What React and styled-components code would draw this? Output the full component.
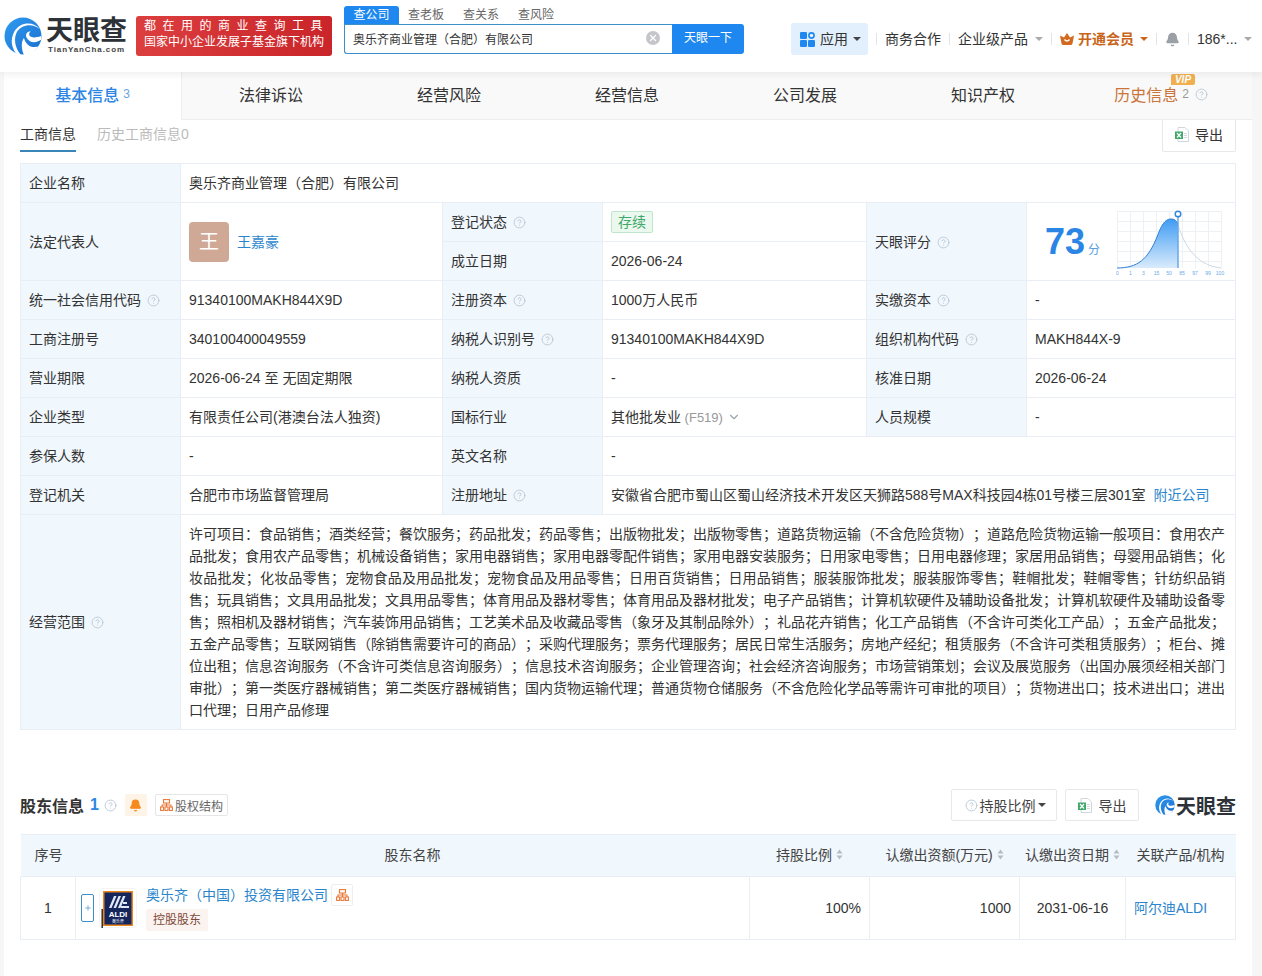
import * as React from 'react'
import styled, { createGlobalStyle } from 'styled-components'
import { CircleHelp, Bell, ChevronDown, X, Plus } from 'lucide-react'

const FONT = `"Liberation Sans", "Noto Sans CJK SC", sans-serif`

const scopeLines = [
	'许可项目：食品销售；酒类经营；餐饮服务；药品批发；药品零售；出版物批发；出版物零售；道路货物运输（不含危险货物）；道路危险货物运输一般项目：食用农产',
	'品批发；食用农产品零售；机械设备销售；家用电器销售；家用电器零配件销售；家用电器安装服务；日用家电零售；日用电器修理；家居用品销售；母婴用品销售；化',
	'妆品批发；化妆品零售；宠物食品及用品批发；宠物食品及用品零售；日用百货销售；日用品销售；服装服饰批发；服装服饰零售；鞋帽批发；鞋帽零售；针纺织品销',
	'售；玩具销售；文具用品批发；文具用品零售；体育用品及器材零售；体育用品及器材批发；电子产品销售；计算机软硬件及辅助设备批发；计算机软硬件及辅助设备零',
	'售；照相机及器材销售；汽车装饰用品销售；工艺美术品及收藏品零售（象牙及其制品除外）；礼品花卉销售；化工产品销售（不含许可类化工产品）；五金产品批发；',
	'五金产品零售；互联网销售（除销售需要许可的商品）；采购代理服务；票务代理服务；居民日常生活服务；房地产经纪；租赁服务（不含许可类租赁服务）；柜台、摊',
	'位出租；信息咨询服务（不含许可类信息咨询服务）；信息技术咨询服务；企业管理咨询；社会经济咨询服务；市场营销策划；会议及展览服务（出国办展须经相关部门',
	'审批）；第一类医疗器械销售；第二类医疗器械销售；国内货物运输代理；普通货物仓储服务（不含危险化学品等需许可审批的项目）；货物进出口；技术进出口；进出',
]

const tabs = ['基本信息', '法律诉讼', '经营风险', '经营信息', '公司发展', '知识产权', '历史信息']

const Swirl = ({ size }) =>
	<svg width={size} height={size} viewBox="0 0 40 40" style={{ flex: 'none' }}>
		<defs>
			<linearGradient id="sw" x1="0" y1="0" x2="1" y2="1">
				<stop offset="0" stopColor="#2f9bf0" />
				<stop offset="1" stopColor="#1a6fd0" />
			</linearGradient>
		</defs>
		<circle cx="20" cy="20" r="19.5" fill="url(#sw)" />
		<path d="M38 13C30 6 19 8 14 15C10 22 11 31 17 39L14 40C8 33 6 24 11 15C17 5 31 4 38 13Z" fill="#fff" />
		<path d="M39 24C33 28 27 27 24 22C22 19 24 15 28 15C24 19 28 24 39 20Z" fill="#fff" />
		<path d="M21 40C18 33 18 26 21 22C23 29 28 33 36 31C32 37 27 40 21 40Z" fill="#fff" />
	</svg>

const AppsIcon = () =>
	<svg width="15" height="15" viewBox="0 0 15 15">
		<rect x="0" y="0" width="7" height="7" rx="1.2" fill="#1e88f0" />
		<circle cx="11.5" cy="3.5" r="2.6" fill="none" stroke="#1e88f0" strokeWidth="1.6" />
		<rect x="0" y="8" width="7" height="7" rx="1.2" fill="#1e88f0" />
		<rect x="8" y="8" width="7" height="7" rx="1.2" fill="#1e88f0" />
	</svg>

const CrownIcon = () =>
	<svg width="14" height="12" viewBox="0 0 14 12">
		<path d="M0 2.5L4 4.5L7 0L10 4.5L14 2.5L12.5 10.5Q12 12 10.5 12H3.5Q2 12 1.5 10.5Z" fill="#d2691e" />
		<path d="M4.5 6.5Q7 9.5 9.5 6.5" fill="none" stroke="#fff" strokeWidth="1.5" />
	</svg>

const ExcelIcon = () =>
	<svg width="14" height="15" viewBox="0 0 14 15">
		<path d="M3 .5H10L13.5 4V14.5H3Z" fill="#fff" stroke="#cfd6dc" />
		<rect x="9" y="6" width="3" height="1" fill="#d5dade" />
		<rect x="9" y="8" width="3" height="1" fill="#d5dade" />
		<rect x="9" y="10" width="3" height="1" fill="#d5dade" />
		<rect x="0" y="4.5" width="8" height="7.5" fill="#3fa76a" />
		<path d="M2 6L6 10.5M6 6L2 10.5" stroke="#fff" strokeWidth="1.2" />
	</svg>

const TreeIcon = () =>
	<svg width="13" height="12" viewBox="0 0 13 12">
		<g fill="none" stroke="#e8793a" strokeWidth="1.1">
			<rect x="3.5" y=".6" width="6" height="3.4" />
			<rect x=".6" y="8" width="3" height="3.4" />
			<rect x="5" y="8" width="3" height="3.4" />
			<rect x="9.4" y="8" width="3" height="3.4" />
			<path d="M2 8V6H11V8M6.5 4V8" />
		</g>
	</svg>

const SortIcon = () =>
	<svg width="7" height="11" viewBox="0 0 7 11">
		<path d="M3.5 .5L6.5 4.5H.5Z" fill="#b4bcc4" />
		<path d="M3.5 10.5L6.5 6.5H.5Z" fill="#b4bcc4" />
	</svg>

const ScoreChart = () =>
	<svg width="110" height="70" viewBox="0 0 110 70">
		<defs>
			<linearGradient id="bell" x1="0" y1="0" x2="0" y2="1">
				<stop offset="0" stopColor="#3f9cf3" />
				<stop offset="1" stopColor="#d9ebfc" />
			</linearGradient>
		</defs>
		<g stroke="#eef1f4" strokeWidth="1" fill="none">
			<path d="M1 4.5H105M1 14.5H105M1 24.5H105M1 34.5H105M1 44.5H105M1 54.5H105" />
			<path d="M1.5 4V61M14.5 4V61M27.5 4V61M40.5 4V61M53.5 4V61M66.5 4V61M79.5 4V61M92.5 4V61M105.5 4V61" />
		</g>
		<path d="M62 18C68 36 78 58 105 61" fill="none" stroke="#cdd9e4" strokeWidth="1" />
		<path d="M1 61C22 61 32 52 41 30C46 16 50 12 55 12C58 12 60 13 62 17V61Z" fill="url(#bell)" />
		<path d="M1 61C22 61 32 52 41 30C46 16 50 12 55 12C58 12 60 13 62 17" fill="none" stroke="#2f7fd4" strokeWidth="1" />
		<path d="M62 10V61" stroke="#6aa9e6" strokeWidth="1.5" />
		<circle cx="62" cy="7" r="2.8" fill="#fff" stroke="#2f86dc" strokeWidth="1.4" />
		<g fontSize="5" fill="#6aa9e6" textAnchor="middle" fontFamily="Liberation Sans">
			<text x="1.5" y="67.5">0</text>
			<text x="14.5" y="67.5">1</text>
			<text x="27.5" y="67.5">3</text>
			<text x="40.5" y="67.5">15</text>
			<text x="53" y="67.5">50</text>
			<text x="66" y="67.5">85</text>
			<text x="79" y="67.5">97</text>
			<text x="92" y="67.5">99</text>
			<text x="104" y="67.5">100</text>
		</g>
	</svg>

const AldiLogo = () =>
	<svg width="38" height="40" viewBox="0 0 38 40" style={{ flex: 'none' }}>
		<rect x=".5" y=".5" width="37" height="39" rx="3" fill="#fff" stroke="#f4f4f4" />
		<rect x="4" y="3" width="30" height="35" fill="#e8871e" />
		<rect x="5.5" y="4.5" width="27" height="32" fill="#14265c" />
		<path d="M10 20L15 8H17.5L12.5 20ZM14.5 20L19.5 8H22L17 20ZM19 20L24 8H26.5L21.5 20Z" fill="#dfe8f4" />
		<path d="M24 14H28V16H24ZM22 18H30V20H22Z" fill="#dfe8f4" />
		<text x="19" y="29" fontSize="8" fontWeight="700" fill="#fff" textAnchor="middle" fontFamily="Liberation Sans">ALDI</text>
		<text x="19" y="35" fontSize="4" fill="#fff" textAnchor="middle" fontFamily="Noto Sans CJK SC">奥乐齐</text>
		<rect x="2.5" y="21" width="1.4" height="19" fill="#222" />
	</svg>

const Help = ({ size = 13 }) => <HelpMark size={size} strokeWidth={1.8} />

const App = () =>
	<Page>
		<GlobalStyle />
		<Header>
			<Logo>
				<Swirl size={38} />
				<LogoText>
					<LogoName>天眼查</LogoName>
					<LogoDomain>TianYanCha.com</LogoDomain>
				</LogoText>
			</Logo>
			<Banner>
				<BannerTop>都在用的商业查询工具</BannerTop>
				<div>国家中小企业发展子基金旗下机构</div>
			</Banner>
			<Search>
				<SearchTabs>
					<SearchTab active>查公司</SearchTab>
					<SearchTab>查老板</SearchTab>
					<SearchTab>查关系</SearchTab>
					<SearchTab>查风险</SearchTab>
				</SearchTabs>
				<SearchRow>
					<SearchInput>
						<span>奥乐齐商业管理（合肥）有限公司</span>
						<ClearButton><X size={10} strokeWidth={3} color="#fff" /></ClearButton>
					</SearchInput>
					<SearchButton>天眼一下</SearchButton>
				</SearchRow>
			</Search>
			<HeaderNav>
				<AppButton><AppsIcon />应用<Caret dark /></AppButton>
				<NavSep />
				<NavItem>商务合作</NavItem>
				<NavSep />
				<NavItem>企业级产品<Caret /></NavItem>
				<NavSep />
				<NavItem vip><CrownIcon />开通会员<Caret vip /></NavItem>
				<NavSep />
				<NavItem><Bell size={15} fill="#9aa0a6" color="#9aa0a6" /></NavItem>
				<NavSep />
				<NavItem>186*...<Caret /></NavItem>
			</HeaderNav>
		</Header>
		<Main>
			<TabBar>
				{tabs.map((t, i) =>
					<Tab key={t} active={i === 0} vip={i === 6}>
						{t}
						{i === 0 && <TabCount active>3</TabCount>}
						{i === 6 && <TabCount>2</TabCount>}
						{i === 6 && <Help size={13} />}
						{i === 6 && <VipBadge>VIP</VipBadge>}
					</Tab>
				)}
			</TabBar>
			<SubTabs>
				<SubTab active>工商信息</SubTab>
				<SubTab>历史工商信息0</SubTab>
				<TopExport><ExcelIcon />导出</TopExport>
			</SubTabs>
			<Content>
				<InfoTable>
					<colgroup>
						<col width="160" />
						<col width="262" />
						<col width="160" />
						<col width="264" />
						<col width="160" />
						<col width="209" />
					</colgroup>
					<tbody>
						<tr>
							<Label>企业名称</Label>
							<Cell colSpan={5}>奥乐齐商业管理（合肥）有限公司</Cell>
						</tr>
						<tr>
							<Label rowSpan={2}>法定代表人</Label>
							<Cell rowSpan={2}>
								<Person>
									<Avatar>王</Avatar>
									<LinkText>王嘉豪</LinkText>
								</Person>
							</Cell>
							<Label>登记状态 <Help /></Label>
							<Cell><StatusTag>存续</StatusTag></Cell>
							<Label rowSpan={2}>天眼评分 <Help /></Label>
							<Cell rowSpan={2}>
								<Score>
									<ScoreValue>73<ScoreUnit>分</ScoreUnit></ScoreValue>
									<ScoreChart />
								</Score>
							</Cell>
						</tr>
						<tr>
							<Label>成立日期</Label>
							<Cell>2026-06-24</Cell>
						</tr>
						<tr>
							<Label>统一社会信用代码 <Help /></Label>
							<Cell>91340100MAKH844X9D</Cell>
							<Label>注册资本 <Help /></Label>
							<Cell>1000万人民币</Cell>
							<Label>实缴资本 <Help /></Label>
							<Cell>-</Cell>
						</tr>
						<tr>
							<Label>工商注册号</Label>
							<Cell>340100400049559</Cell>
							<Label>纳税人识别号 <Help /></Label>
							<Cell>91340100MAKH844X9D</Cell>
							<Label>组织机构代码 <Help /></Label>
							<Cell>MAKH844X-9</Cell>
						</tr>
						<tr>
							<Label>营业期限</Label>
							<Cell>2026-06-24 至 无固定期限</Cell>
							<Label>纳税人资质</Label>
							<Cell>-</Cell>
							<Label>核准日期</Label>
							<Cell>2026-06-24</Cell>
						</tr>
						<tr>
							<Label>企业类型</Label>
							<Cell>有限责任公司(港澳台法人独资)</Cell>
							<Label>国标行业</Label>
							<Cell>其他批发业<MutedCode> (F519)</MutedCode> <ChevronDown size={14} color="#9aa5b1" style={{ verticalAlign: -2 }} /></Cell>
							<Label>人员规模</Label>
							<Cell>-</Cell>
						</tr>
						<tr>
							<Label>参保人数</Label>
							<Cell>-</Cell>
							<Label>英文名称</Label>
							<Cell colSpan={3}>-</Cell>
						</tr>
						<tr>
							<Label>登记机关</Label>
							<Cell>合肥市市场监督管理局</Cell>
							<Label>注册地址 <Help /></Label>
							<Cell colSpan={3}>
								安徽省合肥市蜀山区蜀山经济技术开发区天狮路588号MAX科技园4栋01号楼三层301室
								<NearbyLink>附近公司</NearbyLink>
							</Cell>
						</tr>
						<tr>
							<Label>经营范围 <Help /></Label>
							<ScopeCell colSpan={5}>
								{scopeLines.map(line => <ScopeLine key={line}>{line}</ScopeLine>)}
								<div>口代理；日用产品修理</div>
							</ScopeCell>
						</tr>
					</tbody>
				</InfoTable>

				<SectionBar>
					<SectionTitle>股东信息</SectionTitle>
					<SectionCount>1</SectionCount>
					<Help />
					<BellChip><Bell size={13} fill="#f58a1f" color="#f58a1f" /></BellChip>
					<ChipButton><TreeIcon />股权结构</ChipButton>
					<SectionActions>
						<ActionButton wide><Help />持股比例<Caret dark /></ActionButton>
						<ActionButton><ExcelIcon />导出</ActionButton>
						<SmallLogo>
							<Swirl size={20} />
							<SmallLogoName>天眼查</SmallLogoName>
						</SmallLogo>
					</SectionActions>
				</SectionBar>

				<HolderTable>
					<colgroup>
						<col width="55" />
						<col width="674" />
						<col width="120" />
						<col width="150" />
						<col width="106" />
						<col width="110" />
					</colgroup>
					<thead>
						<tr>
							<HeadCell first>序号</HeadCell>
							<HeadCell>股东名称</HeadCell>
							<HeadCell>持股比例 <SortIcon /></HeadCell>
							<HeadCell>认缴出资额(万元) <SortIcon /></HeadCell>
							<HeadCell>认缴出资日期 <SortIcon /></HeadCell>
							<HeadCell>关联产品/机构</HeadCell>
						</tr>
					</thead>
					<tbody>
						<tr>
							<BodyCell align="center">1</BodyCell>
							<BodyCell compact>
								<Holder>
									<ExpandButton><Plus size={8} strokeWidth={2} /></ExpandButton>
									<AldiLogo />
									<HolderInfo>
										<HolderName>
											<LinkText>奥乐齐（中国）投资有限公司</LinkText>
											<TreeChip><TreeIcon /></TreeChip>
										</HolderName>
										<HolderTag>控股股东</HolderTag>
									</HolderInfo>
								</Holder>
							</BodyCell>
							<BodyCell align="right">100%</BodyCell>
							<BodyCell align="right">1000</BodyCell>
							<BodyCell align="center">2031-06-16</BodyCell>
							<BodyCell><LinkText>阿尔迪ALDI</LinkText></BodyCell>
						</tr>
					</tbody>
				</HolderTable>
			</Content>
		</Main>
	</Page>

export default App;

const GlobalStyle = createGlobalStyle`
	html, body {
		margin: 0;
		height: 100%;
		overflow: hidden;
		background: #f6f6f6;
		font-family: ${FONT};
		font-size: 14px;
		color: #333;
		text-spacing-trim: space-all;
	}
`

const Page = styled.div`
	min-height: 976px;
	display: flex;
	flex-direction: column;
`

const Header = styled.header`
	display: flex;
	align-items: center;
	height: 72px;
	box-sizing: border-box;
	padding: 0 12px 0 4px;
	background: #fff;
	box-shadow: 0 2px 8px rgba(0, 0, 0, 0.07);
	position: relative;
	z-index: 1;
`

const Logo = styled.div`
	flex: none;
	display: flex;
	align-items: center;
	gap: 4px;
	width: 124px;
	margin-top: -1px;
`

const LogoText = styled.div`
	display: flex;
	flex-direction: column;
	align-items: center;
	white-space: nowrap;
`

const LogoName = styled.div`
	font-size: 27px;
	line-height: 28px;
	font-weight: 700;
	color: #2d3238;
	white-space: nowrap;
`

const LogoDomain = styled.div`
	font-size: 8px;
	line-height: 10px;
	font-weight: 700;
	letter-spacing: 0.9px;
	color: #444;
	white-space: nowrap;
`

const Banner = styled.div`
	flex: none;
	width: 196px;
	height: 40px;
	margin-left: 8px;
	box-sizing: border-box;
	padding: 2px 8px 0;
	border-radius: 3px;
	background: linear-gradient(90deg, #dc3e3e, #c9252a);
	color: #fff;
	font-size: 12px;
	line-height: 16px;
	white-space: nowrap;
`

const BannerTop = styled.div`
	letter-spacing: 6.5px;
`

const Search = styled.div`
	flex: none;
	width: 400px;
	margin-left: 12px;
	align-self: flex-start;
	padding-top: 6px;
`

const SearchTabs = styled.div`
	display: flex;
	height: 18px;
`

const SearchTab = styled.div`
	width: ${p => (p.active ? '55px' : 'auto')};
	margin-right: ${p => (p.active ? '9px' : '19px')};
	text-align: center;
	font-size: 12px;
	line-height: 18px;
	border-radius: 3px 3px 0 0;
	background: ${p => (p.active ? '#1e88f0' : 'transparent')};
	color: ${p => (p.active ? '#fff' : '#666')};
`

const SearchRow = styled.div`
	display: flex;
	height: 30px;
`

const SearchInput = styled.div`
	flex: 1;
	display: flex;
	align-items: center;
	justify-content: space-between;
	box-sizing: border-box;
	padding: 0 12px 2px 8px;
	border: 1px solid #3d8fc9;
	border-right: none;
	border-radius: 0 0 0 3px;
	font-size: 12px;
	color: #333;
`

const ClearButton = styled.span`
	display: flex;
	align-items: center;
	justify-content: center;
	width: 14px;
	height: 14px;
	border-radius: 50%;
	background: #c4c6c9;
`

const SearchButton = styled.div`
	width: 72px;
	text-align: center;
	line-height: 29px;
	font-size: 12px;
	color: #fff;
	background: #1e88f0;
	border-radius: 0 3px 3px 0;
`

const HeaderNav = styled.nav`
	display: flex;
	align-items: center;
	margin-left: 47px;
	margin-top: 6px;
	line-height: 18px;
`

const AppButton = styled.div`
	display: flex;
	align-items: center;
	gap: 5px;
	width: 77px;
	height: 32px;
	box-sizing: border-box;
	padding-left: 9px;
	border-radius: 3px;
	background: #e2effc;
	white-space: nowrap;
`

const NavSep = styled.span`
	width: 1px;
	height: 12px;
	margin: 0 8px;
	background: #e4e4e4;
`

const NavItem = styled.div`
	display: flex;
	align-items: center;
	gap: ${p => (p.vip ? '4px' : '5px')};
	white-space: nowrap;
	color: ${p => (p.vip ? '#c8651b' : '#333')};
	font-weight: ${p => (p.vip ? 700 : 400)};
`

const Caret = styled.span`
	width: 0;
	height: 0;
	margin-left: ${p => (p.dark ? '0' : '2px')};
	border: 4px solid transparent;
	border-top-color: ${p => (p.vip ? '#c8651b' : p.dark ? '#444' : '#aaa')};
	border-bottom: none;
`

const Main = styled.main`
	flex: 1;
	margin: 0 10px 0 4px;
	background: #fff;
`

const TabBar = styled.div`
	display: flex;
	height: 48px;
	box-sizing: border-box;
	border-bottom: 1px solid #eee;
	background: #f9f9f9;
`

const Tab = styled.div`
	position: relative;
	flex: none;
	width: 178px;
	box-sizing: border-box;
	padding-bottom: ${p => (p.active ? '4px' : '3px')};
	display: flex;
	align-items: center;
	justify-content: center;
	gap: 4px;
	font-size: 16px;
	color: ${p => (p.active ? '#2b85e4' : p.vip ? '#c8743a' : '#333')};
	font-weight: ${p => (p.active ? 500 : 400)};
	background: ${p => (p.active ? '#fff' : 'transparent')};
	margin-bottom: ${p => (p.active ? '-1px' : '0')};
	border-right: ${p => (p.active ? '1px solid #eee' : 'none')};
`

const TabCount = styled.span`
	font-size: 12px;
	font-weight: 400;
	color: ${p => (p.active ? '#6aa4dc' : '#999')};
`

const VipBadge = styled.span`
	position: absolute;
	top: 2px;
	right: 55px;
	width: 24px;
	height: 11px;
	border-radius: 2px 2px 2px 0;
	background: #f0b050;
	color: #fff;
	font-size: 10px;
	line-height: 11px;
	font-weight: 700;
	font-style: italic;
	text-align: center;
`

const HelpMark = styled(CircleHelp)`
	width: ${p => p.size}px;
	height: ${p => p.size}px;
	color: #bccad6;
	vertical-align: -2px;
	margin-left: 2px;
`

const SubTabs = styled.div`
	display: flex;
	align-items: flex-start;
	height: 32px;
	padding: 0 16px;
`

const SubTab = styled.div`
	height: 32px;
	box-sizing: border-box;
	margin-right: 21px;
	line-height: 28px;
	font-size: 14px;
	color: ${p => (p.active ? '#333' : '#bbb')};
	border-bottom: ${p => (p.active ? '2px solid #3a85b8' : 'none')};
`

const TopExport = styled.div`
	display: flex;
	align-items: center;
	justify-content: center;
	gap: 6px;
	width: 74px;
	height: 32px;
	margin-left: auto;
	box-sizing: border-box;
	padding-bottom: 3px;
	border: 1px solid #e8e8e8;
	border-top: none;
	border-radius: 0 0 2px 2px;
`

const Content = styled.div`
	padding: 11px 16px 0;
`

const InfoTable = styled.table`
	width: 1215px;
	table-layout: fixed;
	border-collapse: collapse;
	tr {
		height: 39px;
	}
`

const Label = styled.td`
	padding: 0 8px;
	border: 1px solid #e8eef4;
	background: #f0f7fd;
	color: #333;
	line-height: 20px;
	white-space: nowrap;
`

const Cell = styled.td`
	padding: 0 8px;
	border: 1px solid #e8eef4;
	color: #333;
	line-height: 20px;
	white-space: nowrap;
`

const Person = styled.div`
	display: flex;
	align-items: center;
	gap: 8px;
`

const Avatar = styled.div`
	width: 40px;
	height: 40px;
	border-radius: 4px;
	background: #cfa996;
	color: #fff;
	font-size: 20px;
	line-height: 40px;
	text-align: center;
`

const LinkText = styled.span`
	color: #2b85cc;
`

const StatusTag = styled.span`
	display: inline-block;
	padding: 0 6px;
	height: 20px;
	line-height: 20px;
	font-size: 14px;
	color: #3fa76a;
	background: #eaf8ee;
	border: 1px solid #bfe6cc;
	border-radius: 2px;
`

const Score = styled.div`
	display: flex;
	align-items: center;
	justify-content: space-between;
	padding: 0 1px 0 10px;
`

const ScoreValue = styled.div`
	padding-top: 8px;
	font-size: 36px;
	line-height: 40px;
	font-weight: 700;
	color: #2b85e4;
	white-space: nowrap;
`

const ScoreUnit = styled.span`
	margin-left: 3px;
	font-size: 12px;
	font-weight: 400;
	color: #5a9ee0;
`

const MutedCode = styled.span`
	font-size: 13px;
	color: #999;
`

const NearbyLink = styled(LinkText)`
	margin-left: 8px;
`

const ScopeCell = styled(Cell)`
	padding: 8px 10px 8px 8px;
	line-height: 22px;
	white-space: normal;
`

const ScopeLine = styled.div`
	text-align: justify;
	text-align-last: justify;
	white-space: nowrap;
`

const SectionBar = styled.div`
	display: flex;
	align-items: center;
	height: 32px;
	margin: 59px 0 13px;
`

const SectionTitle = styled.div`
	font-size: 16px;
	font-weight: 700;
	color: #333;
`

const SectionCount = styled.div`
	margin: 0 3px 0 6px;
	font-size: 16px;
	font-weight: 700;
	color: #2b85e4;
`

const BellChip = styled.div`
	display: flex;
	align-items: center;
	justify-content: center;
	width: 22px;
	height: 22px;
	margin-left: 8px;
	border-radius: 2px;
	background: #fdf3e7;
`

const ChipButton = styled.div`
	display: flex;
	align-items: center;
	gap: 2px;
	height: 22px;
	box-sizing: border-box;
	margin-left: 8px;
	padding: 0 4px;
	border: 1px solid #e6e6e6;
	border-radius: 2px;
	font-size: 12px;
	color: #666;
`

const SectionActions = styled.div`
	display: flex;
	align-items: center;
	gap: 8px;
	margin-left: auto;
`

const ActionButton = styled.div`
	display: flex;
	align-items: center;
	justify-content: center;
	gap: ${p => (p.wide ? '2px' : '7px')};
	width: ${p => (p.wide ? '106px' : '74px')};
	height: 32px;
	box-sizing: border-box;
	border: 1px solid #e8e8e8;
	border-radius: 2px;
	color: #444;
`

const SmallLogo = styled.div`
	display: flex;
	align-items: center;
	gap: 1px;
	margin-left: 8px;
`

const SmallLogoName = styled.span`
	font-size: 20px;
	font-weight: 700;
	color: #2d3238;
`

const HolderTable = styled.table`
	width: 1215px;
	table-layout: fixed;
	border-collapse: collapse;
`

const HeadCell = styled.th`
	height: 39px;
	padding: 0;
	padding-left: ${p => (p.first ? '14px' : '0')};
	padding-bottom: 2px;
	border: 1px solid #e8eef4;
	border-left: none;
	border-right: none;
	background: #f0f7fd;
	font-weight: 400;
	line-height: 20px;
	text-align: ${p => (p.first ? 'left' : 'center')};
	white-space: nowrap;
	color: #444;
`

const BodyCell = styled.td`
	height: 62px;
	padding: ${p => (p.compact ? '0 5px' : '0 8px')};
	border: 1px solid #e8eef4;
	line-height: 20px;
	text-align: ${p => p.align || 'left'};
	color: #333;
`

const Holder = styled.div`
	display: flex;
	align-items: center;
	gap: 5px;
`

const ExpandButton = styled.div`
	flex: none;
	display: flex;
	align-items: center;
	justify-content: center;
	width: 11px;
	height: 26px;
	border: 1px solid #3d8fc9;
	border-radius: 2px;
	color: #3d8fc9;
`

const HolderInfo = styled.div`
	display: flex;
	flex-direction: column;
	align-items: flex-start;
	gap: 3px;
	margin: -2px 0 0 4px;
`

const HolderName = styled.div`
	display: flex;
	align-items: center;
	gap: 3px;
`

const TreeChip = styled.span`
	display: flex;
	align-items: center;
	justify-content: center;
	width: 20px;
	height: 20px;
	border: 1px solid #eee;
	border-radius: 2px;
`

const HolderTag = styled.span`
	padding: 0 7px;
	height: 22px;
	line-height: 22px;
	font-size: 12px;
	color: #7d4a3a;
	background: #fbf3ef;
	border-radius: 2px;
`
